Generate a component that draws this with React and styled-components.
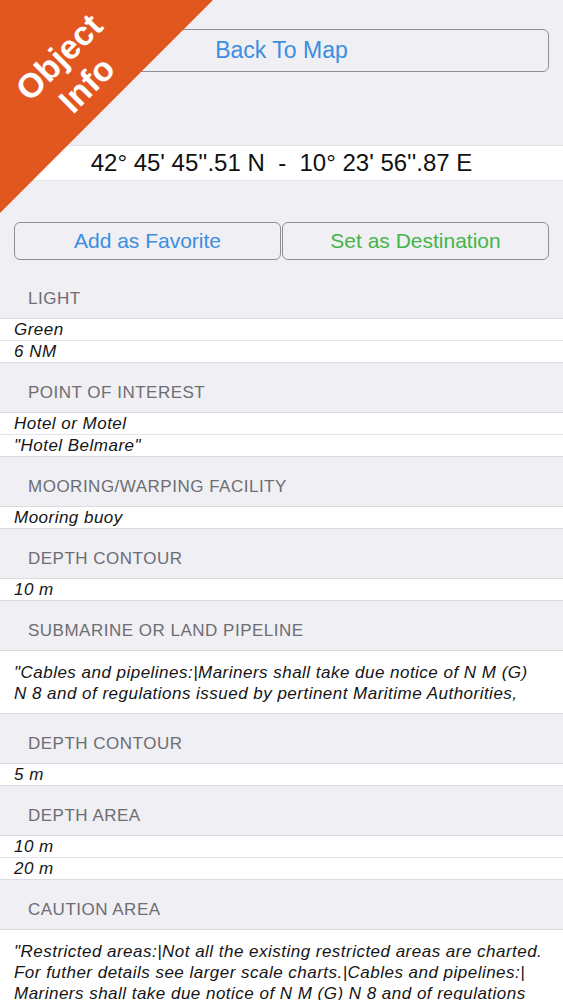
import React from 'react';
import styled, { createGlobalStyle } from 'styled-components';

const GlobalStyle = createGlobalStyle`
  body {
    margin: 0;
    background: #efeff4;
    font-family: "Liberation Sans", Arial, sans-serif;
  }
`;

const Page = styled.div`
  position: relative;
  width: 563px;
  min-height: 1000px;
  overflow: hidden;
  background: #efeff4;
  padding-top: 29px;
`;

const Corner = styled.div`
  position: absolute;
  top: 0;
  left: 0;
  width: 213px;
  height: 213px;
  background: #e2561f;
  clip-path: polygon(0 0, 100% 0, 0 100%);
  z-index: 2;
`;

const CornerLabel = styled.div`
  position: absolute;
  top: 32px;
  left: -7px;
  width: 160px;
  transform: rotate(-45deg);
  transform-origin: center;
  color: #ffffff;
  font-weight: bold;
  font-size: 34px;
  line-height: 39px;
  text-align: center;
`;

const OutlineButton = styled.button`
  display: flex;
  align-items: center;
  justify-content: center;
  height: ${(p) => p.$height}px;
  flex: 1;
  background: transparent;
  border: 1px solid #8e8e93;
  border-radius: 6px;
  color: ${(p) => p.$color};
  font-family: "Liberation Sans", Arial, sans-serif;
  font-size: ${(p) => p.$size}px;
  padding: 0;
`;

const TopBar = styled.div`
  display: flex;
  padding: 0 14px;
`;

const CoordBand = styled.div`
  margin-top: 73px;
  height: 34px;
  background: #ffffff;
  border-top: 1px solid #e3e3e8;
  border-bottom: 1px solid #e3e3e8;
  display: flex;
  align-items: center;
  justify-content: center;
  font-size: 24px;
  color: #111;
  white-space: pre;
`;

const ActionRow = styled.div`
  display: flex;
  gap: 1px;
  margin-top: 41px;
  padding: 0 14px;
  margin-bottom: 9px;
`;

const SectionHeader = styled.div`
  padding: 20px 28px 10px;
  font-size: 17px;
  line-height: 19px;
  letter-spacing: 0.5px;
  color: #6d6d72;
  text-transform: uppercase;
`;

const Group = styled.div`
  background: #ffffff;
  border-top: 1px solid #dcdce0;
  border-bottom: 1px solid #dcdce0;
`;

const Row = styled.div`
  padding: ${(p) => (p.$multi ? '11px 19px 9px 14px' : '0 14px')};
  min-height: 21px;
  line-height: 21px;
  font-size: 17px;
  letter-spacing: 0.48px;
  font-style: italic;
  color: #151515;
  & + & {
    border-top: 1px solid #e3e3e8;
  }
`;

const sections = [
  { title: 'Light', rows: ['Green', '6 NM'] },
  { title: 'Point of Interest', rows: ['Hotel or Motel', '"Hotel Belmare"'] },
  { title: 'Mooring/Warping Facility', rows: ['Mooring buoy'] },
  { title: 'Depth Contour', rows: ['10 m'] },
  {
    title: 'Submarine or Land Pipeline',
    multi: true,
    rows: [
      '"Cables and pipelines:|Mariners shall take due notice of N M (G) N 8 and of regulations issued by pertinent Maritime Authorities,',
    ],
  },
  { title: 'Depth Contour', rows: ['5 m'] },
  { title: 'Depth Area', rows: ['10 m', '20 m'] },
  {
    title: 'Caution Area',
    multi: true,
    rows: [
      '"Restricted areas:|Not all the existing restricted areas are charted. For futher details see larger scale charts.|Cables and pipelines:| Mariners shall take due notice of N M (G) N 8 and of regulations issued by pertinent Maritime Authorities,',
    ],
  },
];

export default function App() {
  return (
    <Page>
      <GlobalStyle />
      <Corner>
        <CornerLabel>
          Object
          <br />
          Info
        </CornerLabel>
      </Corner>
      <TopBar>
        <OutlineButton $height={43} $size={23} $color="#3b8ee0">
          Back To Map
        </OutlineButton>
      </TopBar>
      <CoordBand>{"42° 45' 45''.51 N  -  10° 23' 56''.87 E"}</CoordBand>
      <ActionRow>
        <OutlineButton $height={38} $size={21} $color="#3b8ee0">
          Add as Favorite
        </OutlineButton>
        <OutlineButton $height={38} $size={21} $color="#44b549">
          Set as Destination
        </OutlineButton>
      </ActionRow>
      {sections.map((s, i) => (
        <section key={i}>
          <SectionHeader>{s.title}</SectionHeader>
          <Group>
            {s.rows.map((r, j) => (
              <Row key={j} $multi={s.multi}>
                {r}
              </Row>
            ))}
          </Group>
        </section>
      ))}
    </Page>
  );
}
